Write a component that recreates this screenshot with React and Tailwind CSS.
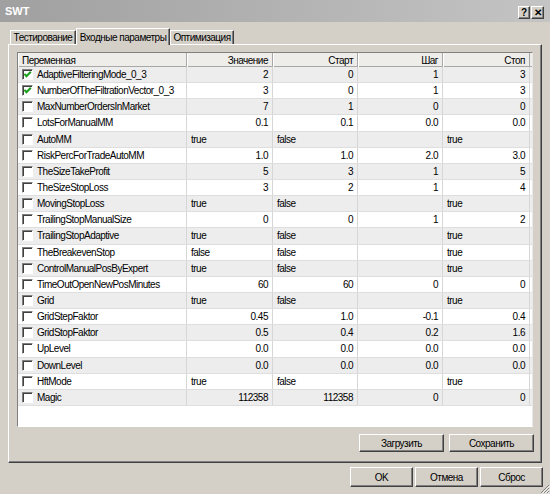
import React from "react";

const rows = [
  { name: "AdaptiveFilteringMode_0_3", on: true, v: ["2", "0", "1", "3"] },
  { name: "NumberOfTheFiltrationVector_0_3", on: true, v: ["3", "0", "1", "3"] },
  { name: "MaxNumberOrdersInMarket", v: ["7", "1", "0", "0"] },
  { name: "LotsForManualMM", v: ["0.1", "0.1", "0.0", "0.0"] },
  { name: "AutoMM", b: true, v: ["true", "false", "", "true"] },
  { name: "RiskPercForTradeAutoMM", v: ["1.0", "1.0", "2.0", "3.0"] },
  { name: "TheSizeTakeProfit", v: ["5", "3", "1", "5"] },
  { name: "TheSizeStopLoss", v: ["3", "2", "1", "4"] },
  { name: "MovingStopLoss", b: true, v: ["true", "false", "", "true"] },
  { name: "TrailingStopManualSize", v: ["0", "0", "1", "2"] },
  { name: "TrailingStopAdaptive", b: true, v: ["true", "false", "", "true"] },
  { name: "TheBreakevenStop", b: true, v: ["false", "false", "", "true"] },
  { name: "ControlManualPosByExpert", b: true, v: ["true", "false", "", "true"] },
  { name: "TimeOutOpenNewPosMinutes", v: ["60", "60", "0", "0"] },
  { name: "Grid", b: true, v: ["true", "false", "", "true"] },
  { name: "GridStepFaktor", v: ["0.45", "1.0", "-0.1", "0.4"] },
  { name: "GridStopFaktor", v: ["0.5", "0.4", "0.2", "1.6"] },
  { name: "UpLevel", v: ["0.0", "0.0", "0.0", "0.0"] },
  { name: "DownLevel", v: ["0.0", "0.0", "0.0", "0.0"] },
  { name: "HftMode", b: true, v: ["true", "false", "", "true"] },
  { name: "Magic", v: ["112358", "112358", "0", "0"] },
];

const cols = "grid grid-cols-[169px_86px_85px_85px_87px]";

const Button = ({ children, className }) => (
  <button
    className={
      "flex items-center justify-center bg-[#d4d0c8] border border-t-white border-l-white border-r-[#404040] border-b-[#404040] shadow-[inset_-1px_-1px_0_#808080] " +
      className
    }
  >
    {children}
  </button>
);

const CheckBox = ({ on }) => (
  <span className="w-[11px] h-[11px] bg-white border border-t-[#808080] border-l-[#808080] border-r-white border-b-white shadow-[inset_1px_1px_0_#404040] flex items-center justify-center shrink-0">
    {on && (
      <svg width="9" height="9" viewBox="0 0 9 9">
        <path d="M1.5 3.8 L3.5 6.3 L7.8 1.8" fill="none" stroke="#18a018" strokeWidth="2" />
      </svg>
    )}
  </span>
);

const Tab = ({ children, active, className }) =>
  active ? (
    <div
      className={
        "relative z-10 h-[17px] -mb-px flex items-center justify-center bg-[#d4d0c8] border-t border-l border-r border-t-white border-l-white border-r-[#404040] shadow-[inset_-1px_0_0_#808080] " +
        className
      }
    >
      {children}
    </div>
  ) : (
    <div
      className={
        "h-[14px] flex items-center justify-center border-t border-l border-r border-t-white border-l-white border-r-[#404040] shadow-[inset_-1px_0_0_#808080] " +
        className
      }
    >
      {children}
    </div>
  );

export default function App() {
  return (
    <div
      className="relative w-[550px] h-[494px] bg-[#d4d0c8] flex flex-col text-[10px] tracking-[-0.5px] text-black overflow-hidden"
      style={{ fontFamily: '"Liberation Sans", Arial, sans-serif' }}
    >
      {/* title bar */}
      <div className="h-[22px] shrink-0 flex items-center justify-between pl-[5px] pr-[6px] bg-gradient-to-r from-[#a0a0a0] to-[#c4c4c4]">
        <span className="text-white font-bold text-[11px] tracking-normal">SWT</span>
        <div className="flex gap-[1px] mt-[2px]">
          <Button className="w-[12px] h-[13px] font-bold text-[10px] tracking-normal">?</Button>
          <Button className="w-[13px] h-[13px] font-bold text-[10px] tracking-normal">✕</Button>
        </div>
      </div>

      <div className="pl-[8px] pr-[8px] pt-[6px]">
        {/* tabs */}
        <div className="flex items-end h-[16px] pl-[2px]">
          <Tab className="w-[66px]">Тестирование</Tab>
          <Tab active className="w-[94px]">Входные параметры</Tab>
          <Tab className="w-[64px]">Оптимизация</Tab>
        </div>

        {/* panel */}
        <div className="h-[419px] flex flex-col pt-[7px] pl-[8px] pr-[8px] border-t border-l border-t-white border-l-white border-r border-b border-r-[#404040] border-b-[#404040] shadow-[inset_-1px_-1px_0_#808080]">
          <div className="h-[375px] w-[516px] bg-white border border-t-[#808080] border-l-[#808080] border-r-[#e8e8e8] border-b-white flex flex-col">
            <div className={cols + " h-[14px] bg-[#eeede9] border-b border-[#a8a8a8]"}>
              {["Переменная", "Значение", "Старт", "Шаг", "Стоп"].map((h, i) => (
                <div
                  key={h}
                  className={
                    "flex items-center px-[4px] border-r border-r-[#a8a8a8] shadow-[inset_1px_0_0_#fff] " +
                    (i === 0 ? "justify-start" : "justify-end")
                  }
                >
                  {h}
                </div>
              ))}
            </div>
            {rows.map((r, idx) => (
              <div
                key={r.name}
                className={
                  cols +
                  " h-[16.15px] border-b border-[#dedede] " +
                  (idx % 2 === 0 ? "bg-[#ededed]" : "bg-white")
                }
              >
                <div className="flex items-center gap-[4px] pl-[4px] border-r border-[#d6d6d6]">
                  <CheckBox on={r.on} />
                  <span>{r.name}</span>
                </div>
                {r.v.map((val, j) => (
                  <div
                    key={j}
                    className={
                      "flex items-center px-[4px] border-r border-[#d6d6d6] " +
                      (r.b ? "justify-start" : "justify-end")
                    }
                  >
                    {val}
                  </div>
                ))}
              </div>
            ))}
          </div>

          <div className="flex justify-end gap-[5px] mt-[7px] mr-[-1px]">
            <Button className="w-[85px] h-[18px]">Загрузить</Button>
            <Button className="w-[85px] h-[18px]">Сохранить</Button>
          </div>
        </div>
      </div>

      {/* dialog buttons */}
      <div className="flex justify-end gap-[2px] pr-[7px] mt-[4px]">
        <Button className="w-[63px] h-[20px]">OK</Button>
        <Button className="w-[63px] h-[20px]">Отмена</Button>
        <Button className="w-[63px] h-[20px]">Сброс</Button>
      </div>
      {/* size grip */}
      <svg className="absolute left-[540px] top-[484px]" width="10" height="10" viewBox="0 0 10 10">
        <path d="M9 1 L1 9 M9 4 L4 9 M9 7 L7 9" stroke="#808080" strokeWidth="1" />
        <path d="M9.8 1.8 L1.8 9.8 M9.8 4.8 L4.8 9.8 M9.8 7.8 L7.8 9.8" stroke="#fff" strokeWidth="1" />
      </svg>
    </div>
  );
}
